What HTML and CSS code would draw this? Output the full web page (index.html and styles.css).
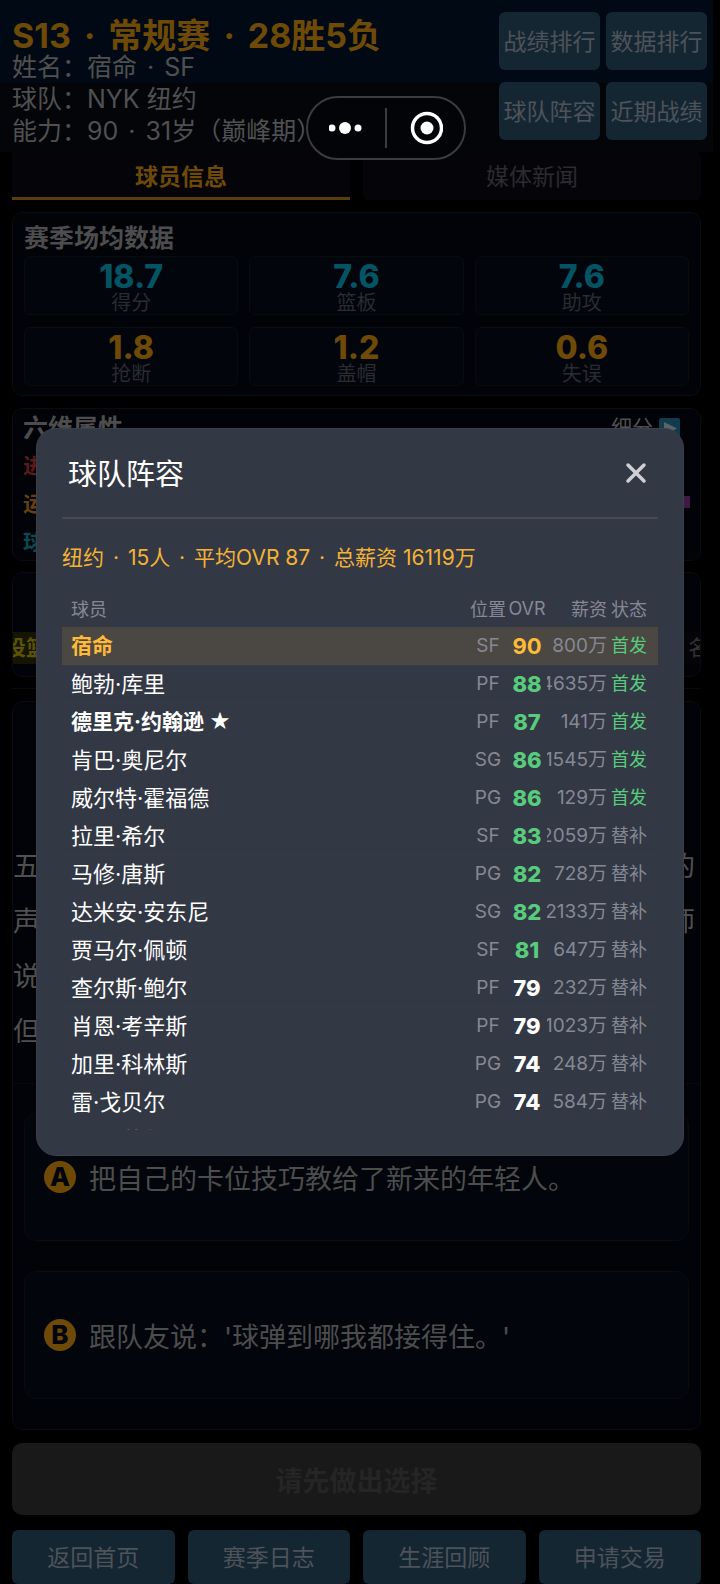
FILE: index.html
```
<!DOCTYPE html>
<html lang="zh-CN">

    <head>
        <meta charset="UTF-8">
        <meta name="viewport" content="width=device-width, initial-scale=1.0">
        <title>球队阵容</title>

        <link rel="stylesheet" href="styles.css">
    </head>

    <body>
        <div class="app">
            <div class="header">
                <div class="info">
                    <h1>S13 <span class="dot">·</span> 常规赛 <span class="dot">·</span> 28胜5负</h1>
                    <p>姓名：宿命 <span class="dot">·</span> SF</p>
                    <p>球队：NYK 纽约</p>
                    <p>能力：90 <span class="dot">·</span> 31岁（巅峰期）</p>
                </div>
                <div class="shortcuts">
                    <button class="btn">战绩排行</button>
                    <button class="btn">数据排行</button>
                    <button class="btn">球队阵容</button>
                    <button class="btn">近期战绩</button>
                </div>
            </div>

            <div class="main">
                <div class="tabs">
                    <button class="tab active">球员信息</button>
                    <button class="tab">媒体新闻</button>
                </div>

                <div class="card season">
                    <h2>赛季场均数据</h2>
                    <div class="stats">
                        <div class="stat"><b>18.7</b><span>得分</span></div>
                        <div class="stat"><b>7.6</b><span>篮板</span></div>
                        <div class="stat"><b>7.6</b><span>助攻</span></div>
                        <div class="stat gold"><b>1.8</b><span>抢断</span></div>
                        <div class="stat gold"><b>1.2</b><span>盖帽</span></div>
                        <div class="stat gold"><b>0.6</b><span>失误</span></div>
                    </div>
                </div>

                <div class="card attrs">
                    <div class="attrs-head">
                        <h2>六维属性</h2>
                        <a href="#">细分
                            <svg width="21" height="21" viewBox="0 0 21 21">
                                <rect width="21" height="21" rx="2" fill="#123c4e" />
                                <path d="M5 4 L18 10.5 L5 17 Z" fill="#5c6468" />
                            </svg>
                        </a>
                    </div>
                    <div class="attr red"><span>进攻</span></div>
                    <div class="attr orange"><span>运动</span><i class="bar"></i></div>
                    <div class="attr cyan"><span>球商</span></div>
                </div>

                <div class="card badges">
                    <span class="chip yellow">投篮</span>
                    <span class="chip">名</span>
                </div>

                <hr>

                <div class="card event">
                    <div class="story">
                        <p><span>五</span><span>的</span></p>
                        <p><span>声</span><span>师</span></p>
                        <p><span>说</span></p>
                        <p><span>但</span></p>
                    </div>
                    <div class="options">
                        <button class="option"><b>A</b>把自己的卡位技巧教给了新来的年轻人。</button>
                        <button class="option"><b>B</b>跟队友说：'球弹到哪我都接得住。'</button>
                    </div>
                </div>

                <button class="next" disabled>请先做出选择</button>

                <div class="footer">
                    <button class="btn">返回首页</button>
                    <button class="btn">赛季日志</button>
                    <button class="btn">生涯回顾</button>
                    <button class="btn">申请交易</button>
                </div>
            </div>
        </div>

        <!-- 小程序胶囊按钮 -->
        <div class="capsule">
            <button aria-label="更多">
                <svg width="36" height="14" viewBox="0 0 36 14" fill="#fff">
                    <circle cx="3" cy="7" r="3.5" />
                    <circle cx="16" cy="7" r="6" />
                    <circle cx="29" cy="7" r="3.5" />
                </svg>
            </button>
            <i></i>
            <button aria-label="关闭">
                <svg width="34" height="34" viewBox="0 0 34 34">
                    <circle cx="18" cy="17" r="14.5" fill="none" stroke="#fff" stroke-width="3.5" />
                    <circle cx="18" cy="17" r="6.5" fill="#fff" />
                </svg>
            </button>
        </div>

        <div class="overlay">
            <div class="modal">
                <div class="modal-head">
                    <h3>球队阵容</h3>
                    <button class="close" aria-label="关闭">
                        <svg width="22" height="22" viewBox="0 0 22 22">
                            <path d="M3 3 L19 19 M19 3 L3 19" stroke="#cfd0d4" stroke-width="3.5" stroke-linecap="round" />
                        </svg>
                    </button>
                </div>
                <div class="modal-body">
                    <p class="summary">纽约 <span class="dot">·</span> 15人 <span class="dot">·</span> 平均OVR 87 <span class="dot">·</span> 总薪资 16119万</p>
                    <table class="roster">
                        <thead>
                            <tr><th>球员</th><th class="pos">位置</th><th class="ovr">OVR</th><th class="pay">薪资</th><th class="state">状态</th></tr>
                        </thead>
                        <tbody>
                            <tr class="me"><td>宿命</td><td>SF</td><td>90</td><td><div>800万</div></td><td class="on">首发</td></tr>
                            <tr class="high"><td>鲍勃·库里</td><td>PF</td><td>88</td><td><div>4635万</div></td><td class="on">首发</td></tr>
                            <tr class="high star"><td>德里克·约翰逊 ★</td><td>PF</td><td>87</td><td><div>141万</div></td><td class="on">首发</td></tr>
                            <tr class="high"><td>肯巴·奥尼尔</td><td>SG</td><td>86</td><td><div>1545万</div></td><td class="on">首发</td></tr>
                            <tr class="high"><td>威尔特·霍福德</td><td>PG</td><td>86</td><td><div>129万</div></td><td class="on">首发</td></tr>
                            <tr class="high"><td>拉里·希尔</td><td>SF</td><td>83</td><td><div>2059万</div></td><td>替补</td></tr>
                            <tr class="high"><td>马修·唐斯</td><td>PG</td><td>82</td><td><div>728万</div></td><td>替补</td></tr>
                            <tr class="high"><td>达米安·安东尼</td><td>SG</td><td>82</td><td><div>2133万</div></td><td>替补</td></tr>
                            <tr class="high"><td>贾马尔·佩顿</td><td>SF</td><td>81</td><td><div>647万</div></td><td>替补</td></tr>
                            <tr><td>查尔斯·鲍尔</td><td>PF</td><td>79</td><td><div>232万</div></td><td>替补</td></tr>
                            <tr><td>肖恩·考辛斯</td><td>PF</td><td>79</td><td><div>1023万</div></td><td>替补</td></tr>
                            <tr><td>加里·科林斯</td><td>PG</td><td>74</td><td><div>248万</div></td><td>替补</td></tr>
                            <tr><td>雷·戈贝尔</td><td>PG</td><td>74</td><td><div>584万</div></td><td>替补</td></tr>
                            <tr class="faded"><td>丹尼·莱尔</td><td></td><td></td><td></td><td></td></tr>
                        </tbody>
                    </table>
                </div>
            </div>
        </div>
    </body>

</html>
```
FILE: styles.css
```
* {
    margin: 0;
    padding: 0;
    box-sizing: border-box;
}

body {
    background-color: #000;
    color: #505050;
    font-family: Inter, "Noto Sans CJK SC", sans-serif;
    font-size: 23px;
    overflow: hidden;
}

button {
    border: none;
    background: none;
    color: inherit;
    font: inherit;
}

.dot {
    margin: 0 3px;
}

.app {
    margin-right: 7px;
}

.header {
    display: flex;
    justify-content: space-between;
    height: 152px;
    padding: 12px 6px 0 12px;
    background: linear-gradient(#010a14 83px, #030509 83px);
}

.info {
    padding-top: 8px;
    white-space: nowrap;
}

.info h1 {
    font-size: 34px;
    line-height: 31px;
    color: #6e4a06;
}

.info h1 .dot {
    margin: 0 5px;
}

.info p {
    font-size: 25px;
    line-height: 32px;
}

.shortcuts {
    display: grid;
    grid-template-columns: 101px 101px;
    grid-auto-rows: 58px;
    gap: 12px 6px;
}

.btn {
    padding-bottom: 3px;
    background-color: #152633;
    color: #4d5358;
    border-radius: 6px;
}

.main {
    padding: 0 12px;
}

.tabs {
    display: grid;
    grid-template-columns: 1fr 1fr;
    gap: 13px;
}

.tab {
    height: 48px;
    background-color: #050509;
    border-bottom: 3px solid transparent;
    border-radius: 6px;
    color: #2b2b30;
}

.tab.active {
    border-radius: 0;
    border-color: #5a3f0a;
    color: #6e4a06;
    font-weight: bold;
}

.card {
    background-color: #020308;
    border: 1px solid #0b0b0d;
    border-radius: 10px;
}

.card h2 {
    font-size: 25px;
    line-height: 30px;
    color: #4d4d4d;
}

.season {
    height: 184px;
    margin-top: 12px;
    padding: 10px 11px;
}

.stats {
    display: grid;
    grid-template-columns: repeat(3, 1fr);
    gap: 12px 11px;
    margin-top: 3px;
}

.stat {
    display: flex;
    flex-direction: column;
    align-items: center;
    height: 59px;
    background-color: #02050c;
    border: 1px solid #0a0b0e;
    border-radius: 6px;
}

.stat b {
    padding-top: 4px;
    font-size: 32px;
    font-weight: 800;
    line-height: 32px;
    color: #045464;
}

.stat.gold b {
    color: #6e4a06;
}

.stat span {
    font-size: 20px;
    line-height: 20px;
    color: #2b2b30;
}

.attrs {
    height: 153px;
    margin-top: 12px;
    padding: 4px 10px;
}

.attrs-head {
    display: flex;
    justify-content: space-between;
    margin-bottom: 2px;
}

.attrs-head a {
    display: flex;
    align-items: center;
    gap: 6px;
    padding-right: 10px;
    color: inherit;
    font-size: 21px;
    line-height: 30px;
    text-decoration: none;
}

.attr {
    display: flex;
    align-items: center;
    justify-content: space-between;
    height: 38px;
    font-size: 21px;
    font-weight: bold;
}

.red { color: #5c1a1a; }
.orange { color: #66400c; }
.cyan { color: #0a4a50; }

.bar {
    width: 60px;
    height: 12px;
    background-color: #3e1a42;
}

.badges {
    display: flex;
    justify-content: space-between;
    align-items: flex-end;
    height: 105px;
    margin-top: 11px;
    padding-bottom: 12px;
    overflow: hidden;
}

.chip {
    width: 48px;
    margin-right: -18px;
    padding-left: 18px;
    background-color: #050509;
    font-size: 21px;
    line-height: 32px;
    white-space: nowrap;
    color: #333;
}

.chip.yellow {
    margin: 0 0 0 -10px;
    padding-left: 2px;
    background-color: #161503;
    color: #5c5208;
    font-weight: bold;
}

hr {
    margin: 11px 0 12px;
    border: none;
    border-top: 1px solid #0a0a0c;
}

.event {
    height: 729px;
}

.story {
    height: 382px;
    padding: 137px 5px 0 0;
    border-bottom: 1px solid #07080c;
}

.story p {
    display: flex;
    justify-content: space-between;
    font-size: 27px;
    line-height: 55px;
}

.options {
    display: grid;
    gap: 30px;
    padding: 29px 11px;
}

.option {
    display: flex;
    align-items: center;
    gap: 13px;
    height: 128px;
    padding-left: 19px;
    background-color: #02050c;
    border: 1px solid #0a0b0e;
    border-radius: 12px;
    color: #4d4d4d;
    font-size: 27px;
}

.option b {
    width: 32px;
    border-radius: 50%;
    background-color: #6e4a06;
    color: #02050c;
    font-size: 26px;
    font-weight: 800;
    line-height: 32px;
}

.next {
    display: block;
    width: 100%;
    height: 72px;
    margin: 13px 0 15px;
    background-color: #191919;
    border-radius: 10px;
    color: #252525;
    font-size: 27px;
    font-weight: bold;
}

.footer {
    display: grid;
    grid-template-columns: repeat(4, 1fr);
    gap: 13px;
}

.footer .btn {
    height: 54px;
}

.capsule {
    position: absolute;
    top: 96px;
    left: 306px;
    display: flex;
    align-items: center;
    width: 160px;
    height: 64px;
    border: 2px solid #3c3c3e;
    border-radius: 32px;
    background-color: #030408;
}

.capsule button {
    flex: 1;
    display: flex;
    justify-content: center;
}

.capsule i {
    width: 2px;
    height: 40px;
    background-color: #3c3c3e;
}

.overlay {
    position: fixed;
    inset: 0;
    display: flex;
    align-items: center;
    justify-content: center;
}

.modal {
    width: 90%;
    padding: 0 25px 25px;
    background-color: #333845;
    border: 1px solid #3a3f4c;
    border-radius: 20px;
    color: #fff;
}

.modal-head {
    display: flex;
    align-items: center;
    justify-content: space-between;
    height: 90px;
    padding: 0 11px 0 6px;
    border-bottom: 2px solid #454957;
}

.modal-head h3 {
    padding-bottom: 3px;
    font-size: 29px;
    font-weight: 400;
}

.close {
    display: flex;
}

.modal-body {
    height: 611px;
    padding-top: 23px;
    overflow: hidden;
}

.summary {
    color: #f5b335;
    font-size: 21px;
    line-height: 32px;
    white-space: nowrap;
}

.roster {
    width: 100%;
    margin-top: 17px;
    table-layout: fixed;
    border-collapse: collapse;
    font-size: 19px;
    color: #858994;
}

.roster th {
    height: 36px;
    padding-bottom: 2px;
    font-size: 18px;
    font-weight: 400;
    white-space: nowrap;
}

.roster th:first-child {
    text-align: left;
    padding-left: 9px;
}

.pos { width: 38px; }
.ovr { width: 40px; }
.pay { width: 60px; }
.state { width: 51px; }

.roster th.pay {
    text-align: right;
}

.roster td {
    height: 38px;
    border-bottom: 1px solid #363a47;
    line-height: 28px;
    text-align: center;
    white-space: nowrap;
}

.roster td:first-child {
    padding-left: 9px;
    text-align: left;
    font-size: 22px;
    color: #fff;
}

.roster td:nth-child(3) {
    font-size: 22px;
    font-weight: 800;
    color: #fff;
}

/* 数字过长时从左侧截断 */
.roster td div {
    display: flex;
    justify-content: flex-end;
    overflow: hidden;
}

.roster td:last-child,
.roster th:last-child {
    padding-right: 11px;
    text-align: right;
    font-size: 18px;
}

.roster .high td:nth-child(3),
.roster td.on {
    color: #58cc7c;
}

.roster .star td:first-child {
    font-size: 21px;
    font-weight: bold;
}

.roster .me {
    background-color: #4b4743;
}

.roster .me td:first-child,
.roster .me td:nth-child(3) {
    color: #ffbb38;
    font-weight: bold;
}

.roster .me td:first-child {
    font-size: 21px;
}

.roster .faded td:first-child {
    color: #858994;
}
```
